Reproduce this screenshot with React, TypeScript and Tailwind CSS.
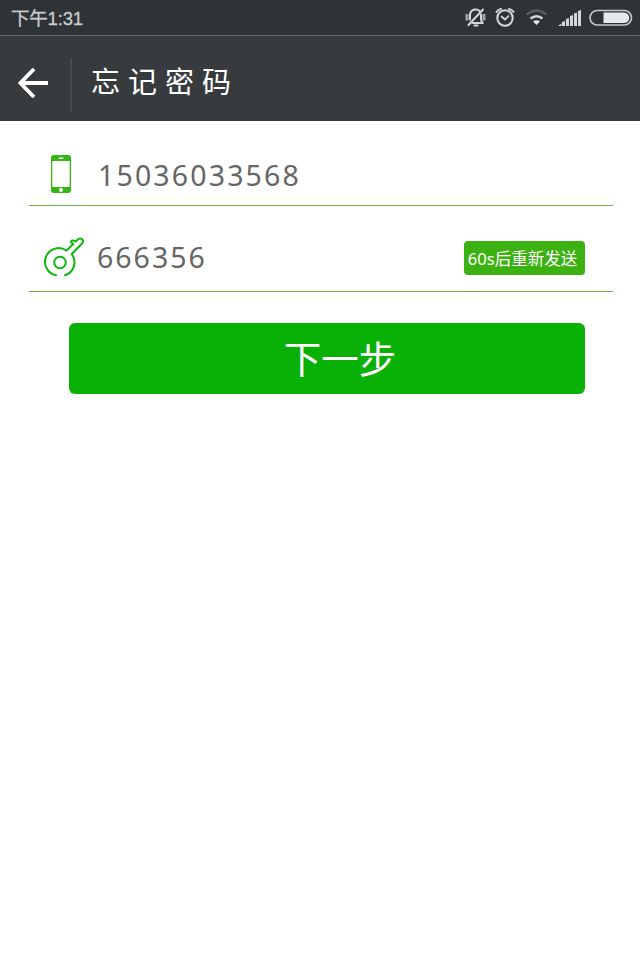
import React from "react";

const latin = "font-['Noto_Sans','Noto_Sans_CJK_SC',sans-serif]";
const cjk = "font-['Noto_Sans_CJK_SC',sans-serif]";

function StatusIcons() {
  return (
    <svg width="180" height="35" viewBox="460 0 180 35" fill="none" className="block">
      <path d="M467 14V20.500M484 14V20.500" stroke="#a0a5a8" strokeWidth="3" />
      <g stroke="#d5d8da" strokeWidth="2" strokeLinecap="round">
        <path d="M470 19.500V14.500C470.500 11 473 9.500 476 9.500C477.500 9.500 478.500 10 479.500 11M481 14.500V19C481 20.500 482 21.500 482.500 23H472.500M474.500 25.500H477.500" />
        <path d="M483 9.500L468.500 25" />
      </g>
      <g stroke="#d5d8da" strokeWidth="2" strokeLinecap="round">
        <circle cx="505" cy="18" r="7.700" />
        <path d="M501.500 16.500L505 19.500L508.500 16" strokeWidth="1.700" />
        <path d="M496.500 12Q498 9.500 501 9M509 9Q512 9.500 513.500 12" />
      </g>
      <path d="M526.500 14.500Q536.500 6.500 546.500 14.500" stroke="#555a5e" strokeWidth="2.500" />
      <path d="M530.500 18.500Q536.500 14 542.500 18.500" stroke="#d5d8da" strokeWidth="2.500" />
      <path d="M533 21.500Q536.500 19 540 21.500L536.500 25Z" fill="#e2e4e5" />
      <g fill="#d5d8da">
        <path d="M558 26L561.500 23.500V26Z" />
        <path d="M562 26V22L565 21V26Z" />
        <path d="M566 26V19L569 18V26Z" />
        <path d="M570 26V16L573 15V26Z" />
        <path d="M574 26V13.500L577 12.500V26Z" />
        <path d="M578 26V11L581 10V26Z" />
      </g>
      <rect x="590" y="10.500" width="41.500" height="14.500" rx="7.200" stroke="#c3c7c9" strokeWidth="1.600" />
      <path d="M603.500 12.500H624A5.200 5.200 0 0 1 624 23H603.500Z" fill="#e6e9ea" />
    </svg>
  );
}

function PhoneIcon() {
  return (
    <svg width="20" height="39" viewBox="0 0 20 39" className="block">
      <rect width="20" height="38" rx="3" fill="#35b612" />
      <rect x="1.300" y="6" width="17.400" height="26" fill="#fff" />
      <rect x="7.500" y="2.500" width="5" height="1.500" rx=".7" fill="#fff" />
      <circle cx="10" cy="35" r="2" fill="#fff" />
    </svg>
  );
}

function KeyIcon() {
  return (
    <svg width="42" height="42" viewBox="43 236 42 42" fill="none" stroke="#0db70d" strokeWidth="2" strokeLinecap="round" strokeLinejoin="round" className="block">
      <circle cx="60" cy="262.500" r="5.800" />
      <path d="M56 275.300A13.700 13.700 0 1 1 66.500 250.600L73.300 244L71 242.200Q71.500 239.500 74.300 240.800L75.500 241.500L78.500 239Q80.500 237.800 82 239.200Q84 241 82.300 243.200L71.700 254A13.700 13.700 0 0 1 65 275.300" />
    </svg>
  );
}

export default function App() {
  return (
    <div className={`h-[960px] w-[640px] overflow-hidden bg-white ${latin}`}>
      <div className="flex h-9 items-start justify-between border-b border-[#62676a] bg-[#2e3336] pl-[11px]">
        <span className="pt-1 font-['Liberation_Sans','Noto_Sans_CJK_SC',sans-serif] text-[18.500px] leading-[30px] tracking-[-0.200px] text-[#c9cdd0] [-webkit-text-stroke:0.300px_#c9cdd0]">下午1:31</span>
        <StatusIcons />
      </div>
      <header className="flex h-[85px] items-center bg-[#373b3e] pl-[18px]">
        <svg width="31" height="30" viewBox="0 0 31 30" fill="none" stroke="#fff" strokeWidth="3.800" className="mt-[9px]">
          <path d="M16 1L2.500 15L16 29M2.500 15H30" />
        </svg>
        <div className="mt-3 ml-[21px] h-[54px] w-[2px] bg-[#464b4e]" />
        <h1 className={`mt-[3px] ml-[19px] text-[29px] leading-10 tracking-[8px] text-white ${cjk}`}>忘记密码</h1>
      </header>
      <main className="pl-[29px]">
        <div className="flex h-[85px] w-[584px] items-start border-b border-[#6ab04f] pl-[22px]">
          <div className="mt-[34px]"><PhoneIcon /></div>
          <span className="mt-[34px] ml-[27px] text-[28.500px] leading-10 tracking-[2.150px] text-[#666]">15036033568</span>
        </div>
        <div className="flex h-[86px] w-[584px] items-start border-b border-[#6ab04f] pl-[14px]">
          <div className="mt-[30px]"><KeyIcon /></div>
          <span className="mt-[31px] ml-3 text-[28.500px] leading-10 tracking-[2px] text-[#666]">666356</span>
          <button className="mt-[35px] mr-7 ml-auto h-[34px] w-[121px] rounded-[4px] bg-[#3cb212] pt-px pr-[4px] text-[16.500px] leading-[34px] whitespace-nowrap text-white">60s后重新发送</button>
        </div>
        <button className={`mt-[31px] ml-10 h-[71px] w-[516px] rounded-[6px] bg-[#09b107] pb-[3px] pl-[26px] text-[37.500px] leading-[68px] text-white ${cjk}`}>下一步</button>
      </main>
    </div>
  );
}
